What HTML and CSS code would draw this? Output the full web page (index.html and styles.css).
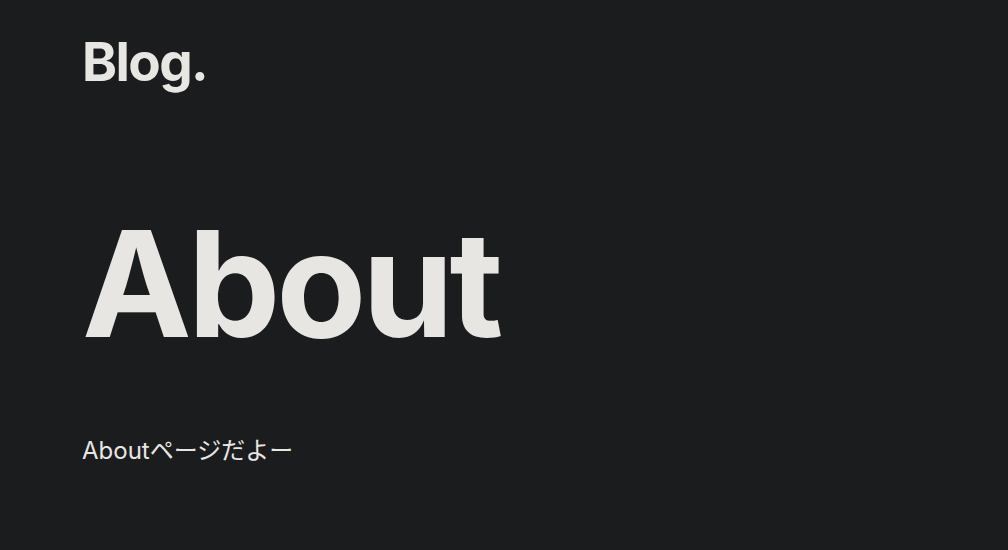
FILE: index.html
```html
<!DOCTYPE html>
<html lang="ja">
<head>
<meta charset="utf-8">
<link rel="stylesheet" href="styles.css">
</head>
<body>
<header class="site-header">
  <a class="logo" href="#">Blog.</a>
</header>
<main class="content">
  <h1 class="title">About</h1>
  <p class="text">Aboutページだよー</p>
</main>
</body>
</html>
```
FILE: styles.css
```css
html, body {
  margin: 0;
  padding: 0;
  background: #1b1c1e;
  color: #e8e6e3;
  font-family: Inter, "Noto Sans CJK JP", sans-serif;
}
body {
  padding: 0 82px;
}
.site-header {
  padding-top: 31px;
}
.logo {
  display: inline-block;
  color: #e8e6e3;
  text-decoration: none;
  font-weight: 700;
  font-size: 53px;
  letter-spacing: -0.03em;
  line-height: 1.2;
}
.content {
  padding-top: 101px;
}
.title {
  margin: 0;
  font-size: 147px;
  font-weight: 700;
  letter-spacing: -0.028em;
  line-height: 1.2;
}
.text {
  margin: 61px 0 0;
  font-size: 24px;
  line-height: 1.5;
}
```
